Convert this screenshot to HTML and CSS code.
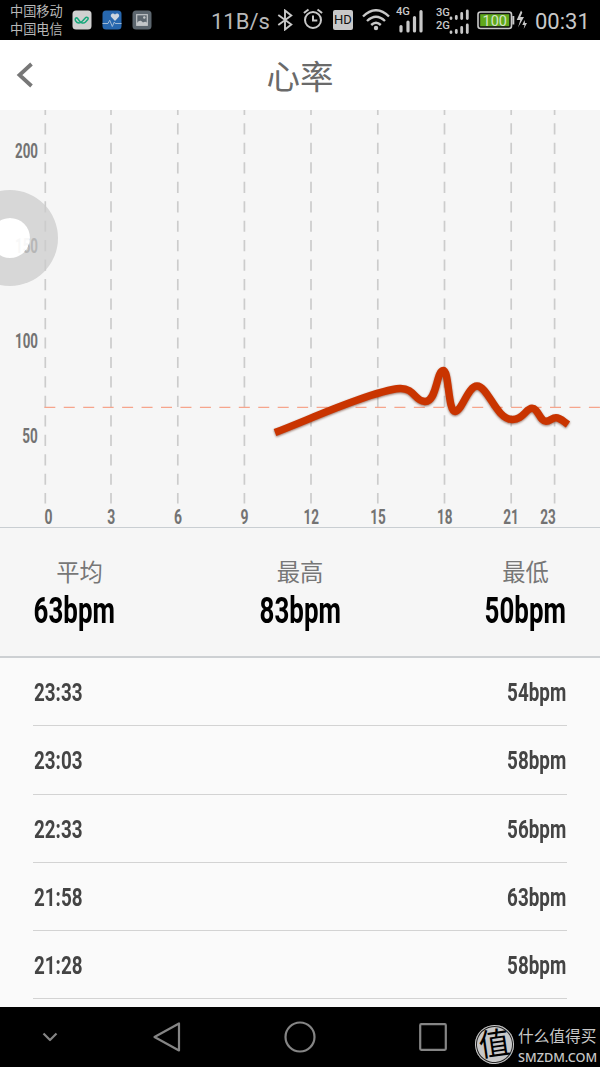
FILE: index.html
```html
<!DOCTYPE html>
<html lang="zh-CN">
<head>
    <meta charset="UTF-8">
    <meta name="viewport" content="width=device-width, initial-scale=1.0">
    <title>心率</title>
    <link rel="stylesheet" href="styles.css">
</head>
<body>
    <div class="status-bar">
        <div class="carriers">
            <span>中国移动</span>
            <span>中国电信</span>
        </div>
        <div class="notifications">
            <svg width="20" height="20" viewBox="0 0 20 20">
                <rect x="0.5" y="0.5" width="19" height="19" rx="3.5" fill="#d0d0d0"/>
                <path d="M4 8c-2 1 0 5 3 5 2 0 3-1.300 4-2.500l2.500-2.800C15 6.500 17 8 15.800 9.500L13.500 12C11.500 14 9 13 7.500 11L5.800 8.800C5.200 8 4.500 7.700 4 8" fill="none" stroke="#15a77a" stroke-width="1.500" stroke-linecap="round"/>
            </svg>
            <svg width="20" height="20" viewBox="0 0 20 20">
                <rect x="0.5" y="0.5" width="19" height="19" rx="3.5" fill="#2767ae"/>
                <path d="M13 11 9.300 7C7.500 4.500 11 2 13 4.500c2-2.500 5.500 0 3.700 2.500z" fill="#ccd5de"/>
                <path d="M.5 13.500H6l1.700-3.300 2.600 6.300 2-4.500.9 1.500h6.300" fill="none" stroke="#9fb9d5" stroke-width="1"/>
            </svg>
            <svg width="20" height="20" viewBox="0 0 20 20">
                <rect x="0.5" y="0.5" width="19" height="19" rx="3.5" fill="#5c666e"/>
                <rect x="4.700" y="4.700" width="10.600" height="10.600" fill="none" stroke="#c3c6c8" stroke-width="1.200"/>
                <path d="M5 13c2-3 4-3 6-.5 1.500-1 3-1 4.300.5v2.300H5z" fill="#c3c6c8"/>
                <circle cx="12.300" cy="7.500" r="1.200" fill="#c3c6c8"/>
            </svg>
        </div>
        <span class="speed">11B/s</span>
        <svg class="bluetooth" width="16" height="22" viewBox="0 0 16 22">
            <path d="M1.300 6l13 9.500L8 20.500v-19l6.300 5L1.300 16" fill="none" stroke="#c8c8c8" stroke-width="1.900"/>
        </svg>
        <svg class="alarm" width="20" height="22" viewBox="0 0 20 22">
            <g fill="none" stroke="#c8c8c8" stroke-width="2">
                <circle cx="10" cy="12" r="8"/>
                <path d="M10 7.500v5h4.300M.9 5 5.500 1.500M19.100 5l-4.600-3.500"/>
            </g>
        </svg>
        <span class="hd">HD</span>
        <svg class="wifi" width="28" height="22" viewBox="0 0 28 22">
            <g fill="none" stroke="#c8c8c8" stroke-width="2.400">
                <path d="M1 7.500q13-12.500 26 0M5 12q9-8.500 18 0M9.200 16q4.800-4.500 9.600 0"/>
            </g>
            <circle cx="14" cy="19" r="2.200" fill="#c8c8c8"/>
        </svg>
        <svg class="signal-4g" width="28" height="30" viewBox="0 0 28 30">
            <text class="net" x="0" y="11" textLength="14" lengthAdjust="spacingAndGlyphs">4G</text>
            <path d="M5 22.500v4.500M12 18v9M18.500 13.500v13.500M25 7.500v19.500" stroke="#c8c8c8" stroke-width="3.200" stroke-linecap="round" fill="none"/>
        </svg>
        <svg class="signal-3g" width="34" height="28" viewBox="0 0 34 28">
            <text class="net" x="0" y="10" textLength="14" lengthAdjust="spacingAndGlyphs">3G</text>
            <text class="net" x="0" y="23" textLength="14" lengthAdjust="spacingAndGlyphs">2G</text>
            <path d="M15 12v.5M20.300 10.500v2M25.700 7.500v5M31.300 5v7.500M15 26v.5M20.300 24.500v2M25.700 21.500v5M31.300 19v7.500" stroke="#c8c8c8" stroke-width="2.800" stroke-linecap="round" fill="none"/>
        </svg>
        <svg class="battery" width="50" height="22" viewBox="0 0 50 22">
            <rect x="1" y="3" width="33.500" height="16.500" rx="2.500" fill="#111" stroke="#c8c8c8" stroke-width="1.600"/>
            <rect x="3.200" y="5.200" width="29" height="12" fill="#5fa81b"/>
            <path d="M36.300 7v8.500" stroke="#c8c8c8" stroke-width="2"/>
            <text x="5.500" y="16.500" textLength="24.500" lengthAdjust="spacingAndGlyphs">100</text>
            <path d="M44 1.500 39.700 11h3.600L41 18.500l6-10.500h-3.700l2-4.500zM47.500 11l-2.200 5h2.200l-.8 4 3.300-6h-2z" fill="#c8c8c8"/>
        </svg>
        <span class="clock">00:31</span>
    </div>

    <header>
        <svg class="back" width="18" height="26" viewBox="0 0 18 26">
            <path d="M15.500 2 3.500 13l12 11" fill="none" stroke="#777" stroke-width="3.800"/>
        </svg>
        <h1>心率</h1>
    </header>

    <svg class="chart" width="600" height="417" viewBox="0 0 600 417">
        <path class="grid" d="M45.300-6.100V393.500M111-6.100V393.500M177.800-6.100V393.500M244.400-6.100V393.500M311-6.100V393.500M377.800-6.100V393.500M444.500-6.100V393.500M511.200-6.100V393.500M554.600-6.100V393.500"/>
        <path class="average" d="M44.300 297.400H600"/>
        <g class="labels">
            <text x="15" y="48" textLength="23" lengthAdjust="spacingAndGlyphs">200</text>
            <text x="15" y="143" textLength="23" lengthAdjust="spacingAndGlyphs">150</text>
            <text x="15" y="237.700" textLength="23" lengthAdjust="spacingAndGlyphs">100</text>
            <text x="22.300" y="332.700" textLength="15.500" lengthAdjust="spacingAndGlyphs">50</text>
            <text x="44.400" y="413.700" textLength="8" lengthAdjust="spacingAndGlyphs">0</text>
            <text x="107.300" y="413.700" textLength="8" lengthAdjust="spacingAndGlyphs">3</text>
            <text x="174" y="413.700" textLength="8" lengthAdjust="spacingAndGlyphs">6</text>
            <text x="240.500" y="413.700" textLength="8" lengthAdjust="spacingAndGlyphs">9</text>
            <text x="303.500" y="413.700" textLength="15.500" lengthAdjust="spacingAndGlyphs">12</text>
            <text x="370.300" y="413.700" textLength="15.500" lengthAdjust="spacingAndGlyphs">15</text>
            <text x="437" y="413.700" textLength="15.500" lengthAdjust="spacingAndGlyphs">18</text>
            <text x="503.300" y="413.700" textLength="15.500" lengthAdjust="spacingAndGlyphs">21</text>
            <text x="540.300" y="413.700" textLength="15.500" lengthAdjust="spacingAndGlyphs">23</text>
        </g>
        <path class="curve" d="M275 322.500C300 313 330 299.500 356 290.500C374 284 390 279 400 278.500C414 278 415 291 424 291.300C437 294 436 261 443.300 260.500C449 260 448 301.500 455 301.500C462 301 468 276 477 276C488 276 496 309 512 309.500C523 310 526 298.300 532 298.300C538 298.300 540 311.300 546 311.300C550 311.300 552 307.800 556 307.800C560 307.800 563 311 568 314.500"/>
    </svg>

    <div class="stats">
        <div class="stat average-stat">
            <p>平均</p>
            <strong>63bpm</strong>
        </div>
        <div class="stat">
            <p>最高</p>
            <strong>83bpm</strong>
        </div>
        <div class="stat">
            <p>最低</p>
            <strong>50bpm</strong>
        </div>
    </div>

    <ul class="records">
        <li><span class="time">23:33</span><span class="rate">54bpm</span></li>
        <li><span class="time">23:03</span><span class="rate">58bpm</span></li>
        <li><span class="time">22:33</span><span class="rate">56bpm</span></li>
        <li><span class="time">21:58</span><span class="rate">63bpm</span></li>
        <li><span class="time">21:28</span><span class="rate">58bpm</span></li>
    </ul>

    <nav>
        <svg width="16" height="10" viewBox="0 0 16 10"><path d="M1.500 1.500 8 8l6.500-6.500"/></svg>
        <svg width="28" height="32" viewBox="0 0 28 32"><path d="M26 2.500v27L1.500 16z"/></svg>
        <svg width="32" height="32" viewBox="0 0 32 32"><circle cx="16" cy="16" r="14.500"/></svg>
        <svg width="28" height="28" viewBox="0 0 28 28"><rect x="1.200" y="1.200" width="25.600" height="25.600" rx="1"/></svg>
    </nav>

    <!-- 悬浮按钮 -->
    <div class="float-button"></div>

    <div class="watermark">
        <span class="seal">值</span>
        <div class="site">
            <span>什么值得买</span>
            <small>SMZDM.COM</small>
        </div>
    </div>
</body>
</html>
```

FILE: styles.css
```css
body {
    font-family: Roboto, 'Noto Sans CJK SC', sans-serif;
    background-color: #fafafa;
    margin: 0;
    width: 600px;
    height: 1067px;
    display: flex;
    flex-direction: column;
    position: relative;
    overflow: hidden;
}
svg {
    display: block;
    flex-shrink: 0;
}
.status-bar {
    height: 40px;
    background-color: #000;
    color: #c8c8c8;
    display: flex;
    align-items: center;
    flex-shrink: 0;
}
.carriers {
    display: flex;
    flex-direction: column;
    margin-left: 10px;
    padding-top: 2px;
    width: 54px;
    font-size: 13.2px;
    line-height: 18px;
    white-space: nowrap;
    color: #b8b8b8;
}
.notifications {
    display: flex;
    gap: 10px;
    margin-left: 8px;
}
.speed {
    margin-left: 59px;
    width: 58px;
    font-size: 22px;
    padding-top: 2px;
    color: #b8b8b8;
}
.bluetooth {
    margin-left: 8px;
}
.alarm {
    margin-left: 10px;
    margin-top: -2px;
}
.hd {
    margin-left: 10px;
    width: 20px;
    height: 20px;
    line-height: 20px;
    border-radius: 2px;
    background-color: #c8c8c8;
    color: #111;
    font-size: 13px;
    text-align: center;
}
.wifi {
    margin-left: 9px;
}
.signal-4g {
    margin-left: 6px;
    margin-top: -3px;
}
.signal-3g {
    margin-left: 12px;
}
.net {
    font-size: 11.5px;
    font-weight: 500;
    fill: #c8c8c8;
}
.battery {
    margin-left: 7px;
}
.battery text {
    font-size: 15.5px;
    fill: #d5e3c8;
}
.clock {
    margin-left: 8px;
    font-size: 22px;
    padding-top: 2px;
    color: #c8c8c8;
}
header {
    height: 70px;
    background-color: #fff;
    display: flex;
    align-items: center;
    flex-shrink: 0;
}
.back {
    margin-left: 16px;
}
h1 {
    flex: 1;
    margin: 0 34px 0 0;
    padding-top: 6px;
    text-align: center;
    font-size: 33.5px;
    font-weight: 400;
    line-height: 48px;
    color: #6a6a6a;
}
.chart {
    background-color: #f6f6f6;
}
.grid {
    stroke: #ccc;
    stroke-width: 1.7;
    stroke-dasharray: 11.2 8.26;
    fill: none;
}
.average {
    stroke: #f6a58c;
    stroke-width: 1.2;
    stroke-dasharray: 11 8.45;
}
.labels text {
    font-size: 20.5px;
    font-weight: 700;
    fill: #737373;
}
.curve {
    fill: none;
    stroke: #c93400;
    stroke-width: 7.4;
    filter: drop-shadow(0 1.5px 1px rgba(90, 30, 10, 0.6));
}
.stats {
    height: 128px;
    padding: 0 34px;
    background-color: #f6f6f6;
    border-top: 1px solid #c9ced2;
    border-bottom: 2px solid #cdd0d3;
    display: flex;
    justify-content: space-between;
    flex-shrink: 0;
}
.stat {
    width: 81px;
    padding-top: 28px;
    display: flex;
    flex-direction: column;
    align-items: center;
}
.stat p {
    margin: 0;
    font-size: 23.3px;
    line-height: 35px;
    color: #777;
}
.average-stat p {
    margin-left: 10px;
}
.stat strong {
    font-size: 36.5px;
    line-height: 40px;
    transform: scaleX(0.71);
    color: #000;
}
.records {
    list-style: none;
    margin: 0;
    padding: 0 33px;
    height: 349px;
    overflow: hidden;
}
.records li {
    height: 68.3px;
    box-sizing: border-box;
    border-bottom: 1px solid #d3d3d3;
    display: flex;
    justify-content: space-between;
    align-items: center;
    font-size: 26.5px;
    font-weight: 700;
    color: #444;
}
.time {
    transform: scaleX(0.71);
    transform-origin: left;
    margin-left: 0.7px;
}
.rate {
    transform: scaleX(0.71);
    transform-origin: right;
    margin-right: 0.5px;
}
nav {
    height: 60px;
    background-color: #000;
    display: flex;
    align-items: center;
    flex-shrink: 0;
    padding-left: 42px;
}
nav svg {
    fill: none;
    stroke: #858585;
    stroke-width: 2.2;
    stroke-linejoin: round;
}
nav svg:nth-child(2) {
    margin-left: 95px;
}
nav svg:nth-child(3) {
    margin-left: 103px;
}
nav svg:nth-child(4) {
    margin-left: 103px;
}
.float-button {
    position: absolute;
    left: -38px;
    top: 190px;
    width: 40px;
    height: 40px;
    border: 28px solid rgba(204, 204, 204, 0.75);
    border-radius: 50%;
    background-color: rgba(255, 255, 255, 0.95);
    background-clip: padding-box;
}
.watermark {
    position: absolute;
    left: 475px;
    top: 1023px;
    display: flex;
    align-items: center;
    color: #c8c8c8;
}
.seal {
    width: 39px;
    height: 39px;
    border-radius: 50%;
    background-color: #c8c8c8;
    box-shadow: inset 0 0 0 1px #c8c8c8, inset 0 0 0 2px #222;
    color: #000;
    font-size: 31px;
    line-height: 39px;
    text-align: center;
    transform: rotate(-8deg);
}
.site {
    display: flex;
    flex-direction: column;
    margin-left: 4px;
    padding-top: 3px;
    white-space: nowrap;
}
.site span {
    font-size: 15.7px;
    line-height: 22px;
}
.site small {
    font-family: 'Noto Sans', sans-serif;
    font-size: 12.7px;
    font-weight: 500;
    line-height: 18px;
}
```
